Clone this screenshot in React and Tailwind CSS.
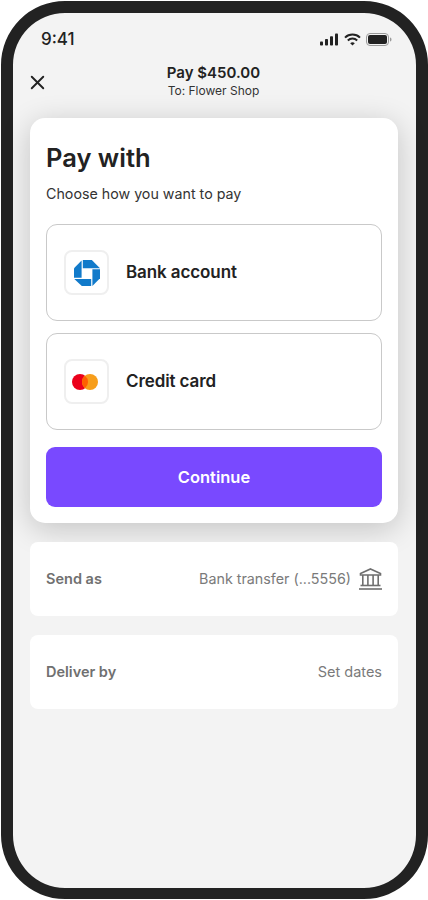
import React from 'react';
import { X } from 'lucide-react';

const ChaseLogo = () => (
  <svg width="28" height="28" viewBox="0 0 28 28" fill="#117ACA">
    <path d="M9.800 1H18.800L27 9.200H9.800Z" />
    <path d="M8.600 1.500V18.800H1V9.200Z" />
    <path d="M1.300 20H18.200V27H8.800Z" />
    <path d="M19.400 10.200H27V19.200L19.400 27Z" />
  </svg>
);

const MastercardLogo = () => (
  <svg width="26" height="16" viewBox="0 0 26 16" className="mr-[3px]">
    <circle cx="8" cy="8" r="8" fill="#EB001B" />
    <circle cx="18" cy="8" r="8" fill="#F79E1B" />
    <path d="M13 1.750a8 8 0 0 1 0 12.500a8 8 0 0 1 0-12.500Z" fill="#FF5F00" />
  </svg>
);

const StatusIcons = () => (
  <div className="flex items-center gap-[5px]">
    <svg width="19" height="13" viewBox="0 0 19 13" fill="#222">
      <rect x="0" y="8.500" width="3" height="4" rx="0.800" />
      <rect x="5" y="6" width="3" height="6.500" rx="0.800" />
      <rect x="10" y="3.200" width="3" height="9.300" rx="0.800" />
      <rect x="15" y="0.500" width="3" height="12" rx="0.800" />
    </svg>
    <svg width="17" height="13" viewBox="0 0 17 13" fill="none" stroke="#222" strokeWidth="2">
      <path d="M1 4.600C5.200.6 11.800.6 16 4.600" />
      <path d="M3.800 7.400C6.400 5 10.600 5 13.200 7.400" />
      <path d="M8.500 12.600L6.200 10.200C7.500 9 9.500 9 10.800 10.200Z" fill="#222" stroke="none" />
    </svg>
    <svg width="26" height="13" viewBox="0 0 26 13">
      <rect x="0.500" y="0.500" width="22" height="12" rx="3.500" fill="none" stroke="#9a9a9a" />
      <rect x="2" y="2" width="19" height="9" rx="2" fill="#222" />
      <path d="M24 4.500c1 .3 1.500 1 1.500 2s-.5 1.700-1.500 2Z" fill="#9a9a9a" />
    </svg>
  </div>
);

const BankIcon = () => (
  <svg width="23" height="22" viewBox="0 0 23 22" fill="none" stroke="#6f6f6f" strokeWidth="1.600">
    <path d="M11.500 1L21.500 5.500V7H1.500V5.500Z" />
    <path d="M3.800 7V17M8.900 7V17M14.100 7V17M19.200 7V17" />
    <path d="M1.500 17.500H21.500" />
    <path d="M0 21H23" />
  </svg>
);

const PayOption = ({ icon, label }) => (
  <div className="flex h-[97px] items-center gap-[17px] rounded-[11px] border border-[#c9c9c9] pl-[17px]">
    <div className="flex size-[45px] items-center justify-center rounded-[8px] border-2 border-[#efefef] bg-white">
      {icon}
    </div>
    <span className="text-[17px] font-semibold tracking-[-0.1px] text-[#222222]">{label}</span>
  </div>
);

const InfoRow = ({ label, children }) => (
  <div className="flex h-[74px] items-center justify-between rounded-[8px] bg-white pl-[16px] pr-[16px]">
    <span className="text-[14.500px] font-semibold text-[#707070]">{label}</span>
    {children}
  </div>
);

const App = () => (
  <div className="h-[900px] w-[428px] bg-white p-px font-['Inter',sans-serif]">
    <div className="h-[898px] w-[427px] rounded-[64px] border-[12px] border-b-[11px] border-[#222222] bg-[#f3f3f3]">
      {/* Status bar */}
      <div className="flex items-center justify-between pl-[28px] pr-[24px] pt-[15px] leading-[22px]">
        <span className="text-[17px] font-medium text-[#222222]">9:41</span>
        <StatusIcons />
      </div>

      {/* Header */}
      <div className="mt-[14px] flex items-start pl-[13px] pr-[15px]">
        <X size={23} strokeWidth={2} className="mt-[7px] text-[#222222]" />
        <div className="flex-1 text-center">
          <p className="text-[15px] font-semibold leading-[17px] text-[#222222]">Pay $450.00</p>
          <p className="mt-px text-[12px] leading-[17px] text-[#333333]">To: Flower Shop</p>
        </div>
        <div className="w-[23px]" />
      </div>

      <div className="flex flex-col pl-[17px] pr-[18px] pt-[19px]">
        {/* Pay with card */}
        <div className="flex h-[405px] flex-col rounded-[15px] bg-white px-[16px] pt-[24px] shadow-[0_6px_30px_rgba(0,0,0,0.2)]">
          <h1 className="text-[25.500px] font-semibold leading-[32px] text-[#222222]">Pay with</h1>
          <p className="mt-[10px] text-[14.250px] leading-[20px] text-[#333333]">Choose how you want to pay</p>
          <div className="mt-[20px] flex flex-col gap-[12px]">
            <PayOption icon={<ChaseLogo />} label="Bank account" />
            <PayOption icon={<MastercardLogo />} label="Credit card" />
          </div>
          <button className="mt-[17px] h-[60px] rounded-[9px] bg-[#7949ff] text-[16.500px] font-semibold text-white">
            Continue
          </button>
        </div>

        <div className="mt-[19px] flex flex-col gap-[19px]">
          <InfoRow label="Send as">
            <div className="flex items-center gap-[8px]">
              <span className="text-[14.300px] text-[#7a7a7a]">Bank transfer (...5556)</span>
              <BankIcon />
            </div>
          </InfoRow>
          <InfoRow label="Deliver by">
            <span className="text-[14.500px] text-[#7a7a7a]">Set dates</span>
          </InfoRow>
        </div>
      </div>
    </div>
  </div>
);

export default App;
